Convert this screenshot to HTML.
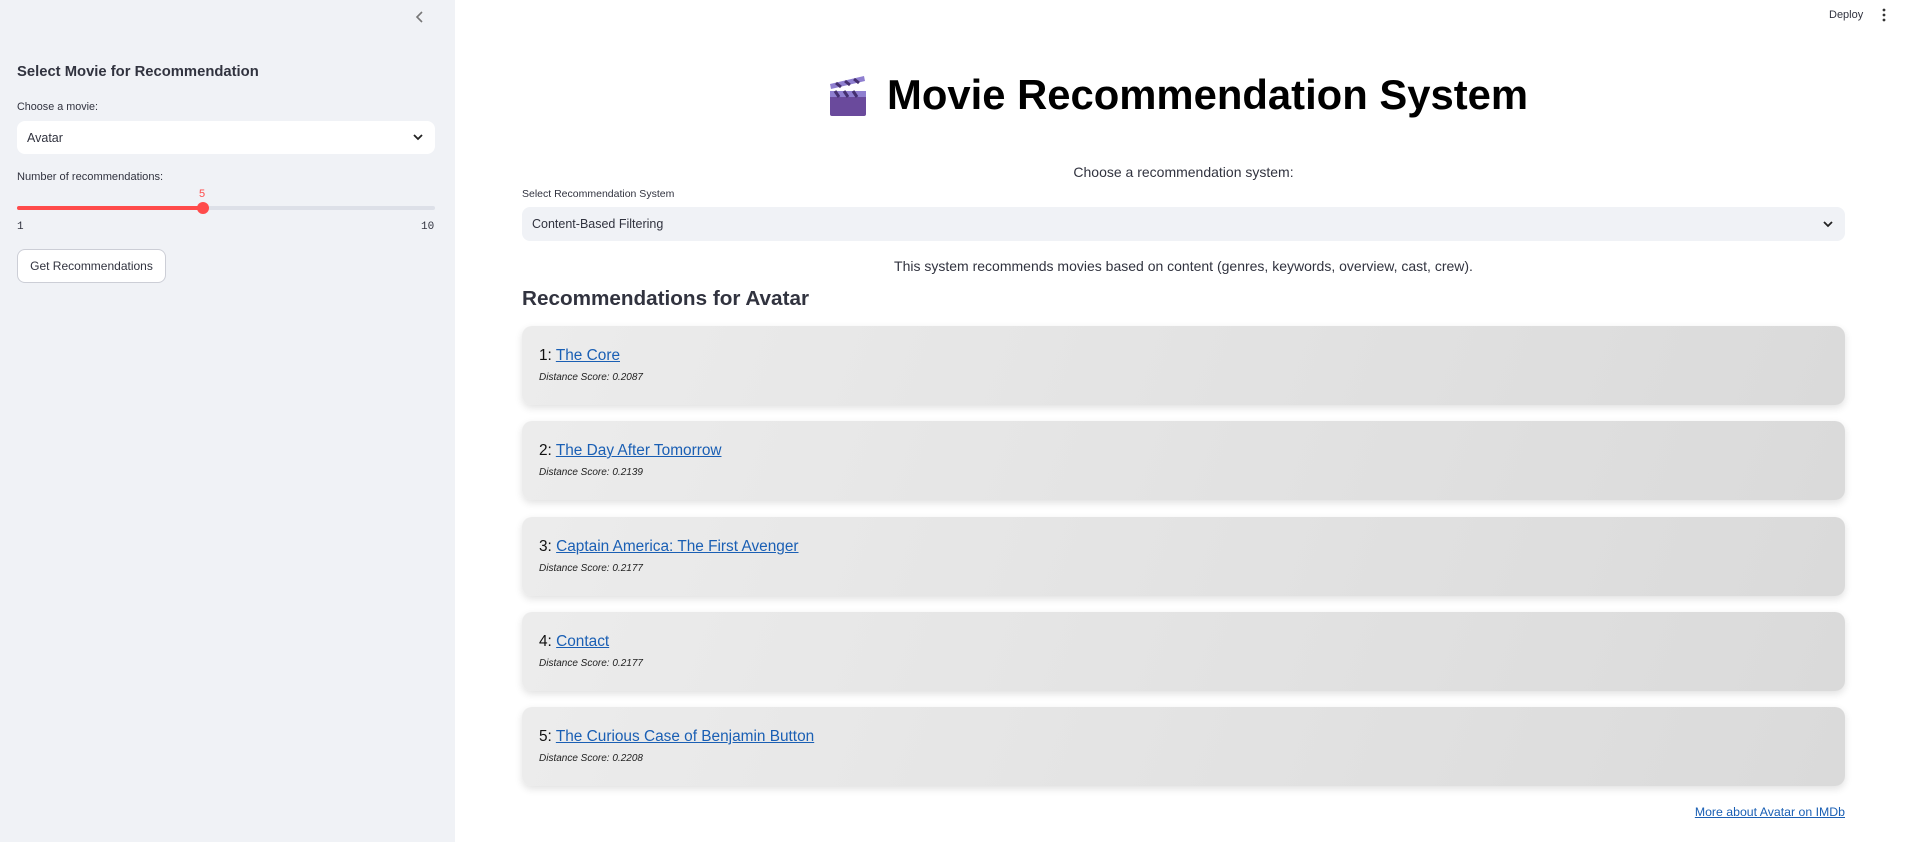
<!DOCTYPE html>
<html><head><meta charset="utf-8"><style>
*{box-sizing:border-box;margin:0;padding:0}
body{width:1907px;height:842px;overflow:hidden;font-family:"Liberation Sans",sans-serif;background:#fff;color:#31333f;position:relative}
.sb{position:absolute;left:0;top:0;width:455px;height:842px;background:#f0f2f6}
.abs{position:absolute;white-space:nowrap}
.sel{position:absolute;border-radius:8px;font-size:13px;display:flex;align-items:center;padding-left:10px}
.card{position:absolute;left:522px;width:1323px;height:79px;border-radius:10px;background:linear-gradient(110deg,#ececec,#dadada);box-shadow:0 3px 8px rgba(0,0,0,.12)}
.card .t{position:absolute;left:17px;top:21px;font-size:15.4px;color:#111}
.card .t a{color:#1a5fb4;text-decoration:underline}
.card .s{position:absolute;left:17px;top:46px;font-size:10px;font-style:italic;color:#222}
</style></head><body>
<div class="sb"></div>
<svg class="abs" style="left:414px;top:10px" width="12" height="14" viewBox="0 0 12 14"><path d="M8 2 L3 7 L8 12" stroke="#777" stroke-width="1.6" fill="none"/></svg>
<div class="abs" style="left:17px;top:64px;font-size:14.8px;font-weight:bold">Select Movie for Recommendation</div>
<div class="abs" style="left:17px;top:101px;font-size:10.8px">Choose a movie:</div>
<div class="sel" style="left:17px;top:121px;width:418px;height:33px;background:#fff;font-size:12.5px">Avatar</div>
<svg class="abs" style="left:412px;top:132px" width="12" height="10"><path d="M2 3 L6 7 L10 3" stroke="#222" stroke-width="1.8" fill="none"/></svg>
<div class="abs" style="left:17px;top:171px;font-size:11.1px">Number of recommendations:</div>
<div class="abs" style="left:199px;top:188px;font-size:11px;color:#ff4b4b">5</div>
<div class="abs" style="left:17px;top:206px;width:418px;height:4px;background:#dde0e8;border-radius:2px"></div>
<div class="abs" style="left:17px;top:206px;width:186px;height:4px;background:#ff4b4b;border-radius:2px"></div>
<div class="abs" style="left:197px;top:202px;width:12px;height:12px;background:#ff4b4b;border-radius:50%"></div>
<div class="abs" style="left:17px;top:221px;font-size:11px;font-family:'Liberation Mono',monospace">1</div>
<div class="abs" style="left:421px;top:221px;font-size:11px;font-family:'Liberation Mono',monospace">10</div>
<div class="abs" style="left:17px;top:249px;width:149px;height:34px;border:1px solid #ccced6;border-radius:8px;background:#fff;font-size:12px;display:flex;align-items:center;justify-content:center">Get Recommendations</div>

<div class="abs" style="left:1829px;top:9px;font-size:11px">Deploy</div>
<svg class="abs" style="left:1881px;top:8px" width="6" height="14"><circle cx="3" cy="2" r="1.4" fill="#333"/><circle cx="3" cy="7" r="1.4" fill="#333"/><circle cx="3" cy="12" r="1.4" fill="#333"/></svg>

<svg class="abs" style="left:829px;top:75px" width="40" height="42" viewBox="0 0 40 42"><rect x="1" y="16" width="36" height="25" rx="2" fill="#6a4a9c"/><rect x="1" y="16" width="36" height="6" fill="#8f7fd0"/><path d="M6 16 L10 22 M15 16 L19 22 M24 16 L28 22" stroke="#453070" stroke-width="3"/><path d="M1 9 L35 1 L36 6 L2 14 Z" fill="#8f7fd0"/><path d="M7 8 L12 12 M16 6 L21 10 M25 4 L30 8" stroke="#453070" stroke-width="3"/></svg>
<div class="abs" style="left:887px;top:71px;font-size:41.8px;font-weight:bold;color:#000">Movie Recommendation System</div>

<div class="abs" style="left:522px;width:1323px;top:164px;text-align:center;font-size:14px">Choose a recommendation system:</div>
<div class="abs" style="left:522px;top:188px;font-size:10.5px">Select Recommendation System</div>
<div class="sel" style="left:522px;top:207px;width:1323px;height:34px;background:#f0f2f6;font-size:12.5px">Content-Based Filtering</div>
<svg class="abs" style="left:1822px;top:219px" width="12" height="10"><path d="M2 3 L6 7 L10 3" stroke="#222" stroke-width="1.8" fill="none"/></svg>
<div class="abs" style="left:522px;width:1323px;top:258px;text-align:center;font-size:14px">This system recommends movies based on content (genres, keywords, overview, cast, crew).</div>
<div class="abs" style="left:522px;top:287px;font-size:20.7px;font-weight:bold">Recommendations for Avatar</div>

<div class="card" style="top:326px"><div class="t">1: <a>The Core</a></div><div class="s">Distance Score: 0.2087</div></div>
<div class="card" style="top:421px"><div class="t">2: <a>The Day After Tomorrow</a></div><div class="s">Distance Score: 0.2139</div></div>
<div class="card" style="top:517px"><div class="t">3: <a>Captain America: The First Avenger</a></div><div class="s">Distance Score: 0.2177</div></div>
<div class="card" style="top:612px"><div class="t">4: <a>Contact</a></div><div class="s">Distance Score: 0.2177</div></div>
<div class="card" style="top:707px"><div class="t">5: <a>The Curious Case of Benjamin Button</a></div><div class="s">Distance Score: 0.2208</div></div>
<div class="abs" style="right:62px;top:805px;font-size:12.3px;color:#1a5fb4;text-decoration:underline">More about Avatar on IMDb</div>
</body></html>
